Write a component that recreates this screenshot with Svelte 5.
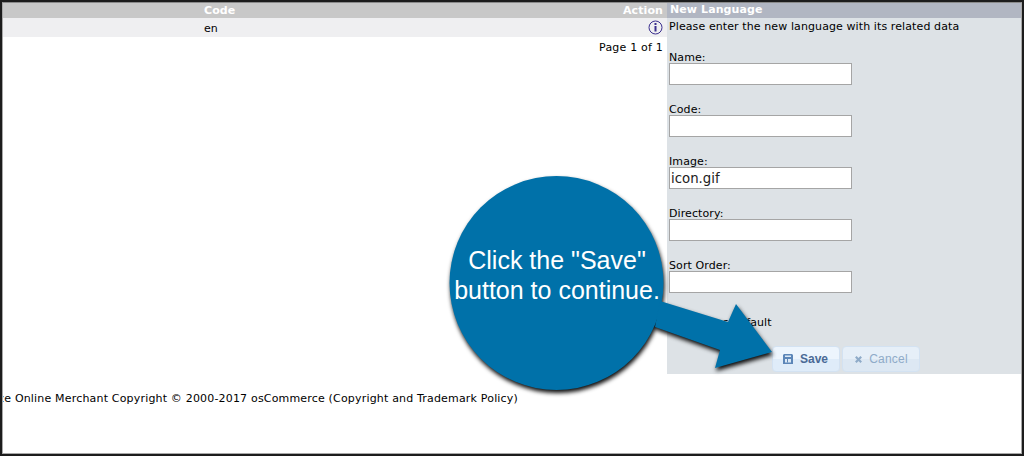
<script>
  const fields = [
    { label: 'Name:', value: '' },
    { label: 'Code:', value: '' },
    { label: 'Image:', value: 'icon.gif' },
    { label: 'Directory:', value: '' },
    { label: 'Sort Order:', value: '' }
  ];
</script>

<div class="frame">
  <div class="page">
    <div class="columns">
      <section class="list">
        <div class="thead">
          <span class="code">Code</span>
          <span class="action">Action</span>
        </div>
        <div class="trow">
          <span class="code">en</span>
          <svg class="info" viewBox="0 0 15 15" width="15" height="15" aria-hidden="true">
            <circle cx="7.5" cy="7.5" r="6.5" fill="none" stroke="#3b2f8f" stroke-width="1" />
            <rect x="6.5" y="6" width="2" height="5.5" fill="#3b2f8f" />
            <rect x="6.5" y="3" width="2" height="2" fill="#3b2f8f" />
          </svg>
        </div>
        <div class="pager">Page 1 of 1</div>
      </section>

      <aside class="panel">
        <div class="phead">New Language</div>
        <p class="intro">Please enter the new language with its related data</p>
        {#each fields as f}
          <div class="field">
            <label for={f.label}>{f.label}</label>
            <input id={f.label} type="text" value={f.value} />
          </div>
        {/each}
        <div class="check"><input id="is-default" type="checkbox" /><label for="is-default">Set as default</label></div>
        <div class="buttons">
          <button class="btn save">
            <svg viewBox="0 0 10 10" width="10" height="10" aria-hidden="true">
              <path d="M1 0h8l1 1v9H0V1z" fill="#5c86b8" />
              <rect x="2" y="1.5" width="6" height="1.5" fill="#dbe9f6" />
              <rect x="2" y="5" width="6" height="3.5" fill="#dbe9f6" />
              <rect x="4" y="5" width="1" height="3.5" fill="#5c86b8" />
            </svg>
            Save
          </button>
          <button class="btn cancel">
            <svg viewBox="0 0 10 10" width="9" height="9" aria-hidden="true">
              <path d="M2 2l6 6M8 2l-6 6" stroke="#8fabc8" stroke-width="2.4" fill="none" />
            </svg>
            Cancel
          </button>
        </div>
      </aside>
    </div>

    <footer class="foot"><span>osCommerce Online Merchant Copyright © 2000-2017 osCommerce (Copyright and Trademark Policy)</span></footer>
  </div>

  <div class="callout">
    <svg class="shape" viewBox="0 0 1024 456" width="1024" height="456" aria-hidden="true">
      <circle cx="556.5" cy="283" r="107" fill="#0071a9" />
      <path d="M660 301L728 322L736 304L772 352L715 368L720 350L655 327Z" fill="#0071a9" />
    </svg>
    <div class="say">Click the "Save"<br />button to continue.</div>
  </div>
</div>

<style>
  :global(body) {
    margin: 0;
    background: #fff;
  }
  .frame {
    position: relative;
    box-sizing: border-box;
    width: 1024px;
    height: 456px;
    overflow: hidden;
    border: 2px solid #1c1c1c;
    font-family: "DejaVu Sans", Verdana, sans-serif;
    font-size: 11px;
    letter-spacing: 0.1px;
    color: #000;
  }
  .frame::after {
    content: "";
    position: absolute;
    inset: 0;
    border: 1px solid #a8a8a8;
    border-top-color: #8a8a8a;
    pointer-events: none;
  }
  .page {
    display: flex;
    flex-direction: column;
    height: 100%;
  }
  .columns {
    display: flex;
    height: 372px;
  }
  .list {
    width: 665px;
    flex: none;
  }
  .thead {
    display: flex;
    justify-content: space-between;
    align-items: center;
    height: 16px;
    padding: 0 4px 0 202px;
    background: #c8c8c8;
    color: #fff;
    font-weight: 700;
  }
  .trow {
    display: flex;
    justify-content: space-between;
    align-items: center;
    height: 19px;
    padding: 0 4px 0 202px;
    background: #efeff1;
  }
  .trow .code {
    padding-top: 2px;
  }
  .pager {
    margin-top: 4px;
    text-align: right;
    padding-right: 4px;
    letter-spacing: 0.2px;
  }
  .panel {
    flex: 1;
    background: #dde2e6;
  }
  .phead {
    height: 16px;
    line-height: 16px;
    padding-left: 3px;
    background: #b1b6c2;
    color: #fff;
    font-weight: 700;
  }
  .intro {
    margin: 2px 0 0 2px;
    line-height: 14px;
  }
  .field {
    margin: 0 0 0 2px;
    height: 52px;
    display: flex;
    flex-direction: column;
    justify-content: flex-end;
  }
  .intro + .field {
    height: 51px;
  }
  .field label {
    line-height: 10px;
  }
  .field input {
    box-sizing: border-box;
    width: 183px;
    height: 22px;
    margin: 0;
    padding: 1px 1px;
    border: 1px solid #a5a5a5;
    background: #fff;
    font: 13.3px "DejaVu Sans", Verdana, sans-serif;
    color: #222;
    outline: none;
  }
  .check {
    display: flex;
    align-items: center;
    margin: 23px 0 0 8px;
    height: 14px;
    line-height: 14px;
  }
  .check input {
    width: 13px;
    height: 13px;
    margin: 0 6px 0 0;
  }
  .buttons {
    display: flex;
    gap: 2px;
    margin: 16px 0 0 105px;
  }
  .btn {
    display: flex;
    align-items: center;
    justify-content: center;
    gap: 7px;
    box-sizing: border-box;
    height: 26px;
    padding: 0;
    border: 1px solid #d3e2f2;
    border-radius: 4px;
    background: linear-gradient(#edf5fd 0 50%, #dfecf9 50% 100%);
    font: 12px "Liberation Sans", Arial, sans-serif;
  }
  .save {
    width: 68px;
    padding-right: 1px;
    font-weight: 700;
    color: #4a6a96;
  }
  .cancel {
    width: 78px;
    gap: 6px;
    color: #8fabc8;
    background: linear-gradient(#e6eff8 0 50%, #dde8f3 50% 100%);
    letter-spacing: 0.2px;
  }
  .foot {
    display: flex;
    justify-content: flex-end;
    width: 516px;
    margin-top: 18px;
    overflow: hidden;
    white-space: nowrap;
    line-height: 14px;
    letter-spacing: 0.18px;
  }
  .foot span {
    flex: none;
  }
  .callout {
    position: absolute;
    left: -2px;
    top: -2px;
    width: 1024px;
    height: 456px;
    pointer-events: none;
  }
  .shape {
    display: block;
    filter: drop-shadow(1px 3px 2px rgba(0, 0, 0, 0.95));
  }
  .say {
    position: absolute;
    left: 450px;
    top: 245px;
    width: 214px;
    text-align: center;
    color: #fff;
    font: 25px/30px "Liberation Sans", Arial, sans-serif;
    letter-spacing: 0;
  }
</style>
